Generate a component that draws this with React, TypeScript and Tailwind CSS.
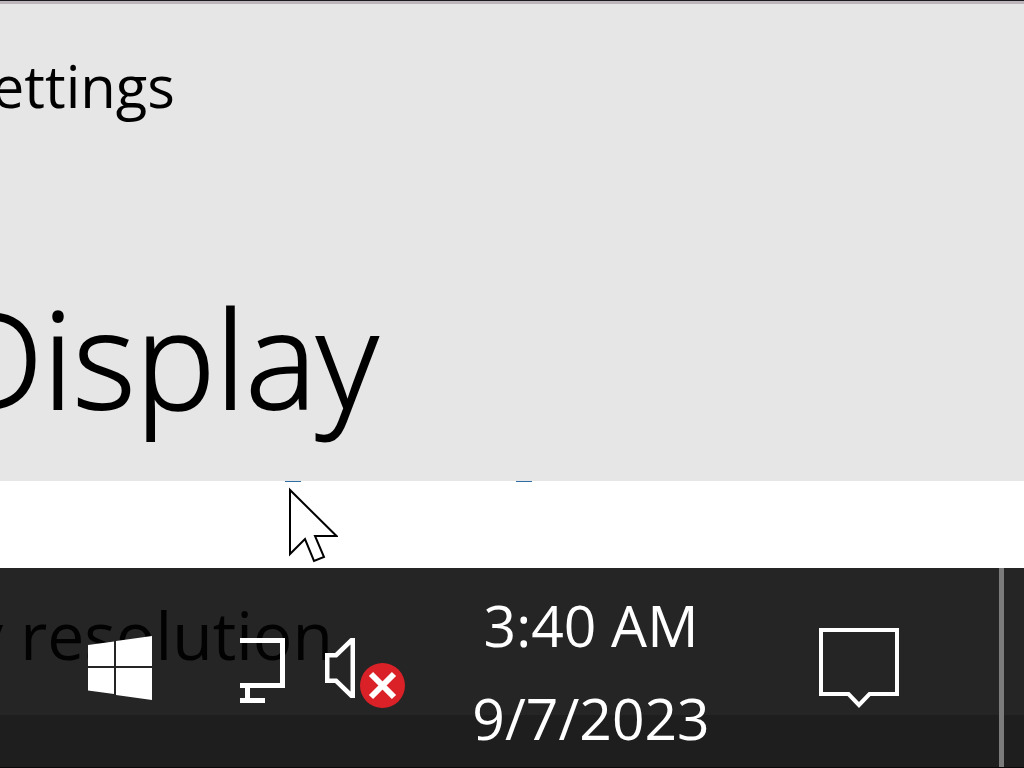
function WindowsLogo() {
  return (
    <svg viewBox="0 0 64 64" className="w-16 h-16" fill="#fff" aria-hidden="true">
      <path d="M0 9 26 5.4V30H0zM28 5.1 64 0v30H28zM0 32h26v26L0 54.5zM28 32h36v32L28 58.9z" />
    </svg>
  );
}

function NetworkIcon() {
  return (
    <svg viewBox="0 0 45 66" className="w-[45px] h-[66px]" fill="none" stroke="#fff" strokeWidth="5" aria-hidden="true">
      <path d="M0 3.5H42.5V48.5H0M7.5 48V63M0 63.5H25" />
    </svg>
  );
}

function VolumeMutedIcon() {
  return (
    <svg viewBox="0 0 82 72" className="w-[82px] h-[72px]" fill="none" aria-hidden="true">
      <path
        d="M0 17H10L25.5 2H30V62H25.5L10 47H0zM4.5 21.5V42.5H12L25.5 55.5V8.5L12 21.5z"
        fill="#fff"
        fillRule="evenodd"
      />
      <circle cx="57.5" cy="49.5" r="22.5" fill="#da2128" />
      <path d="M46 38 69 61M69 38 46 61" stroke="#fff" strokeWidth="6" />
    </svg>
  );
}

function ActionCenterIcon() {
  return (
    <svg viewBox="0 0 80 80" className="w-20 h-20" fill="none" stroke="#fff" strokeWidth="4" aria-hidden="true">
      <path d="M2 2H78V66H50.5L40 77 29.5 66H2z" />
    </svg>
  );
}

function Cursor() {
  return (
    <svg viewBox="0 0 50 76" className="absolute left-[288px] top-[6px] w-[50px] h-[76px]" aria-hidden="true">
      <path d="M2 3V67L17 52L26 74L36 70L27 49H48.5z" fill="#fff" stroke="#000" strokeWidth="2" />
    </svg>
  );
}

export default function App() {
  return (
    <div className="min-h-screen flex flex-col overflow-hidden bg-white text-black font-['Open_Sans','Noto_Sans',sans-serif]">
      <header className="h-[481px] shrink-0 overflow-hidden bg-[#e6e6e6] border-t border-[#1c191c]">
        <div className="h-[3px] bg-[#bcb6bc]" />
        <div className="w-[175px] pt-[42px] flex justify-end whitespace-nowrap text-[58px] leading-[80px]">
          <p>Settings</p>
        </div>
        <div className="w-[378px] pt-[141px] flex justify-end whitespace-nowrap text-[134px] leading-[180px] font-light [-webkit-text-stroke:2px_#000]">
          <h1>Display</h1>
        </div>
      </header>

      <main className="relative h-[87px] shrink-0 bg-white">
        <div className="h-[2px] pl-[285px] flex gap-[215px]">
          <span className="w-4 h-px bg-[#2f6ea5]" />
          <span className="w-4 h-px bg-[#2f6ea5]" />
        </div>
        <Cursor />
      </main>

      <footer className="relative h-[200px] shrink-0 flex overflow-hidden bg-linear-to-b from-[#252525] from-74% to-[#1e1e1e] to-74% border-b border-[#0c090c] text-white">
        <div className="absolute left-0 top-[26px] w-[333px] flex justify-end whitespace-nowrap text-[66px] leading-[80px] text-[#020202]">
          <p>Display resolution</p>
        </div>
        <button aria-label="Start" className="relative ml-[88px] mt-[68px] self-start">
          <WindowsLogo />
        </button>
        <button aria-label="Network" className="relative ml-[88px] mt-[69px] self-start">
          <NetworkIcon />
        </button>
        <button aria-label="Volume muted" className="relative ml-10 mt-[68px] self-start">
          <VolumeMutedIcon />
        </button>
        <div className="relative flex-1 flex justify-between">
          <button className="ml-[64px] mt-[11px] w-[240px] self-start text-center whitespace-nowrap text-[57px] leading-[93px]">
            <time className="block">3:40 AM</time>
            <time className="block">9/7/2023</time>
          </button>
          <button aria-label="Notifications" className="mt-[60px] mr-[100px] self-start">
            <ActionCenterIcon />
          </button>
        </div>
        <button aria-label="Show desktop" className="relative w-[25px] border-l-[5px] border-[#7b7b7b]" />
      </footer>
    </div>
  );
}
